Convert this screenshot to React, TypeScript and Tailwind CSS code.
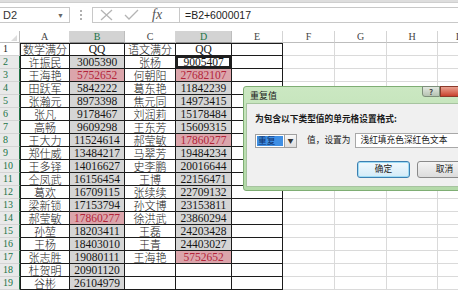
import React from 'react';

const COL_W = ['w-[50px]', 'w-[55px]', 'w-[51px]', 'w-[56px]', 'w-[51px]', 'w-[52px]', 'w-[52px]', 'w-[51px]', 'w-[40px]'];
const LETTERS = ['A', 'B', 'C', 'D', 'E', 'F', 'G', 'H', 'I'];

const ROWS: string[][] = [
  ['数学满分', 'QQ', '语文满分', 'QQ'],
  ['许振民', '3005390', '张杨', '9005407'],
  ['王海艳', '5752652', '何朝阳', '27682107'],
  ['田跃军', '5842222', '葛东艳', '11842239'],
  ['张瀚元', '8973398', '焦元同', '14973415'],
  ['张凡', '9178467', '刘润莉', '15178484'],
  ['高畅', '9609298', '王东芳', '15609315'],
  ['王大力', '11524614', '郝莹敏', '17860277'],
  ['郑仕威', '13484217', '马翠芳', '19484234'],
  ['王多铎', '14016627', '史李鹏', '20016644'],
  ['仝凤武', '16156454', '王博', '22156471'],
  ['葛欢', '16709115', '张续续', '22709132'],
  ['梁新锁', '17153794', '孙文博', '23153811'],
  ['郝莹敏', '17860277', '徐洪武', '23860294'],
  ['孙堃', '18203411', '王磊', '24203428'],
  ['王杨', '18403010', '王青', '24403027'],
  ['张志胜', '19080111', '王海艳', '5752652'],
  ['杜贺明', '20901120', '', ''],
  ['谷彬', '26104979', '', ''],
];

// duplicates flagged by the rule: "row-col"
const PINK = new Set(['3-1', '14-1', '3-3', '8-3', '17-3']);

function Cell({ row, col, value }: { row: number; col: number; value: string }) {
  const inTable = col <= 4;
  const isNum = /^\d+$/.test(value);
  const selected = (col === 1 && row >= 2) || (col === 3 && row >= 3 && row <= 17);
  const pink = PINK.has(`${row}-${col}`);
  const active = row === 2 && col === 3;

  const cls = [
    COL_W[col],
    'h-full shrink-0 flex items-center justify-center overflow-hidden whitespace-nowrap leading-[11px]',
    inTable ? 'border-r border-b border-[#1c1c1c]' : 'border-r border-b border-[#dadada]',
    inTable && col === 0 ? 'border-l' : '',
    inTable && row === 1 ? 'border-t' : '',
    pink ? 'bg-[#dba5ab] text-[#b3243a]' : selected ? 'bg-[#d5d5d5] text-[#151515]' : 'bg-white text-[#151515]',
    active ? 'shadow-[inset_0_0_0_2px_#1f1f1f]' : '',
    isNum || value === 'QQ'
      ? "font-['Liberation_Serif',serif] text-[11.5px]"
      : "font-['Noto_Sans_CJK_SC',sans-serif] text-[11px] font-light",
  ].join(' ');

  return <div className={cls}>{value}</div>;
}

function FormulaBar() {
  return (
    <div className="h-[31px] bg-white flex flex-col">
      <div className="h-[3px] bg-[#dedede] border-b border-[#cfcfcf]" />
      <div className="flex items-start pt-[4px] h-[28px]">
        <div className="w-[70px] h-[16px] border border-[#c8c8c8] border-l-0 flex items-center justify-between pl-[3px] pr-[5px]">
          <span className="font-['Liberation_Sans',sans-serif] text-[11px] leading-none text-[#333]">D2</span>
          <span className="text-[7px] leading-none text-[#666]">▼</span>
        </div>
        <div className="w-[22px] h-[16px] flex flex-col items-center justify-center gap-[2px]">
          <span className="w-[2px] h-[2px] bg-[#b0b0b0]" />
          <span className="w-[2px] h-[2px] bg-[#b0b0b0]" />
          <span className="w-[2px] h-[2px] bg-[#b0b0b0]" />
        </div>
        <div className="w-[88px] h-[16px] border border-[#c8c8c8] flex items-center pl-[7px] gap-[11px]">
          <svg width="13" height="12" viewBox="0 0 13 12">
            <path d="M1 1 L12 11 M12 1 L1 11" stroke="#b4b4b4" strokeWidth="1.3" fill="none" />
          </svg>
          <svg width="15" height="12" viewBox="0 0 15 12">
            <path d="M1 6 L5 10 L14 1" stroke="#b4b4b4" strokeWidth="1.3" fill="none" />
          </svg>
          <span className="font-['Liberation_Serif',serif] italic text-[14px] leading-none text-[#555] ml-[2px]">fx</span>
        </div>
        <div className="flex-1 h-[16px] border border-[#c8c8c8] border-l-0 border-r-0 flex items-center pl-[5px]">
          <span className="font-['Liberation_Sans',sans-serif] text-[10.5px] leading-none text-[#222]">=B2+6000017</span>
        </div>
      </div>
    </div>
  );
}

function Sheet() {
  return (
    <div className="flex flex-col">
      <div className="flex h-[12px]">
        <div className="w-[20px] h-full shrink-0 bg-white border-r border-b border-[#bdbdbd] relative">
          <div className="absolute right-[2px] bottom-[1px] w-0 h-0 border-l-[6px] border-l-transparent border-b-[6px] border-b-[#dcdcdc]" />
        </div>
        {LETTERS.map((l, i) => {
          const hl = i === 1 || i === 3;
          return (
            <div
              key={l}
              className={`${COL_W[i]} h-full shrink-0 flex items-center justify-center border-r border-b font-['Liberation_Serif',serif] text-[10px] leading-none ${
                hl ? 'bg-[#d3d3d3] text-[#217346] border-r-[#bdbdbd] border-b-[#8f8f8f]' : 'bg-white text-[#444] border-[#d4d4d4] border-b-[#bdbdbd]'
              }`}
            >
              {l}
            </div>
          );
        })}
      </div>
      {ROWS.map((r, ri) => {
        const row = ri + 1;
        const sel = row >= 2;
        return (
          <div key={row} className="flex h-[13px]">
            <div
              className={`w-[20px] h-full shrink-0 flex items-center pl-[3px] border-b border-r font-['Liberation_Serif',serif] text-[10px] leading-none ${
                sel ? 'bg-[#e9e9e9] text-[#217346] border-b-[#d4d4d4] border-r-[#217346]' : 'bg-white text-[#222] border-[#d4d4d4] border-r-[#bdbdbd]'
              }`}
            >
              {row}
            </div>
            {LETTERS.map((_, ci) => (
              <Cell key={ci} row={row} col={ci} value={r[ci] ?? ''} />
            ))}
          </div>
        );
      })}
    </div>
  );
}

function Dialog() {
  return (
    <div className="absolute left-[243px] top-[86px] w-[222px] h-[105px] border border-[#7fae74] bg-gradient-to-b from-[#cbe8c2] to-[#b3d9a8] rounded-[3px] font-['Noto_Sans_CJK_SC',sans-serif]">
      <div className="h-[16px] flex items-center pl-[6px] relative">
        <span className="text-[9px] leading-none text-[#1b1b1b]">重复值</span>
        <div className="absolute left-[178px] top-[-1px] w-[18px] h-[11px] bg-gradient-to-b from-[#e2e8e0] to-[#b6c3b2] border border-[#7d8f7a] rounded-bl-[3px] flex items-center justify-center text-[8px] font-bold text-[#4a4a4a] leading-none">
          ?
        </div>
        <div className="absolute left-[196px] top-[-1px] w-[30px] h-[11px] bg-gradient-to-b from-[#e8a090] to-[#c8402c] border border-[#8a3a2a]" />
      </div>
      <div className="ml-[2px] h-[84px] bg-[#f0f0f0] border border-[#a7c4a0] flex flex-col pl-[8px]">
        <div className="mt-[9px] h-[12px] flex items-center text-[8.7px] leading-none font-bold text-[#1a1a1a] whitespace-nowrap">
          为包含以下类型值的单元格设置格式:
        </div>
        <div className="mt-[8px] flex items-center h-[15px] whitespace-nowrap">
          <div className="w-[30px] h-[14px] shrink-0 border border-[#a0a0a0] bg-white flex items-center p-[1px]">
            <span className="flex-1 h-full bg-[#3f8fe4] text-[#10306a] text-[8.7px] leading-[10px] flex items-center pl-[1px]">重复</span>
          </div>
          <div className="w-[12px] h-[14px] shrink-0 border border-l-0 border-[#a0a0a0] bg-gradient-to-b from-[#f7f7f7] to-[#dedede] flex items-center justify-center text-[6px] leading-none text-[#333]">
            ▼
          </div>
          <span className="ml-[10px] shrink-0 text-[8.7px] leading-none text-[#1a1a1a]">值，设置为</span>
          <div className="ml-[5px] w-[110px] h-[15px] shrink-0 border border-[#a8a8a8] bg-white flex items-center pl-[4px]">
            <span className="text-[8.7px] leading-none text-[#1a1a1a]">浅红填充色深红色文本</span>
          </div>
        </div>
        <div className="mt-[13px] flex items-center h-[17px] pl-[102px] gap-[7px]">
          <div className="w-[53px] h-[17px] shrink-0 rounded-[3px] border border-[#3c7fb1] shadow-[inset_0_0_0_1px_#9fdcf5] bg-gradient-to-b from-[#f2f9fd] to-[#d3ebf8] flex items-center justify-center text-[8.7px] leading-none text-[#1a1a1a]">
            确定
          </div>
          <div className="w-[55px] h-[17px] shrink-0 rounded-[3px] border border-[#8a8a8a] bg-gradient-to-b from-[#f4f4f4] to-[#dcdcdc] flex items-center justify-center text-[8.7px] leading-none text-[#1a1a1a]">
            取消
          </div>
        </div>
      </div>
    </div>
  );
}

export default function App() {
  return (
    <div className="w-[458px] h-[291px] overflow-hidden relative bg-white">
      <FormulaBar />
      <Sheet />
      <Dialog />
    </div>
  );
}
